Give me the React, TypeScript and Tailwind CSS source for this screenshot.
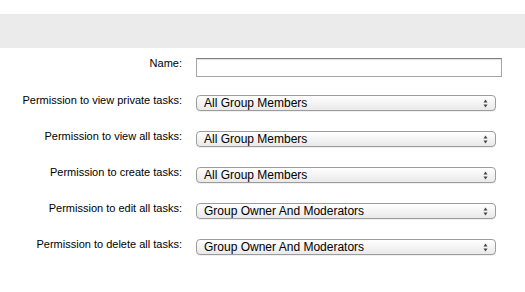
const rows = [
  { label: "Permission to view private tasks:", value: "All Group Members" },
  { label: "Permission to view all tasks:", value: "All Group Members" },
  { label: "Permission to create tasks:", value: "All Group Members" },
  { label: "Permission to edit all tasks:", value: "Group Owner And Moderators" },
  { label: "Permission to delete all tasks:", value: "Group Owner And Moderators" },
];

function SelectBox({ value }: { value: string }) {
  return (
    <div className="w-[300px] h-[16px] rounded-[4px] border border-[#9c9c9c] bg-gradient-to-b from-white to-[#e9e9e9] flex items-center justify-between pl-[7px] pr-[7px] shadow-[0_1px_0_rgba(0,0,0,0.06)]">
      <span className="text-[12px] leading-[14px] text-black">{value}</span>
      <svg width="5" height="9" viewBox="0 0 5 9" className="text-[#444]">
        <path d="M2.5 0.5 L4.5 3.5 L0.5 3.5 Z" fill="currentColor" />
        <path d="M2.5 8.5 L4.5 5.5 L0.5 5.5 Z" fill="currentColor" />
      </svg>
    </div>
  );
}

export default function App() {
  return (
    <div className="w-[525px] h-[292px] bg-white font-['Liberation_Sans',Arial,sans-serif] text-[11px] text-black pt-[14px]">
      {/* header bar */}
      <div className="h-[34px] bg-[#ebebeb]" />

      <div className="pt-[10px] flex flex-col">
        {/* Name row */}
        <div className="grid grid-cols-[182px_1fr] gap-x-[14px] items-start">
          <label className="text-right leading-[13px] -mt-[1px]">Name:</label>
          <input
            className="w-[306px] h-[19px] border border-[#a5a5a5] border-t-[#7f7f7f] bg-white outline-none px-1 text-[11px] shadow-[inset_0_1px_1px_rgba(0,0,0,0.12)]"
            defaultValue=""
          />
        </div>

        <div className="mt-[18px] flex flex-col gap-[20px]">
          {rows.map((r) => (
            <div key={r.label} className="grid grid-cols-[182px_1fr] gap-x-[14px] items-start">
              <label className="text-right leading-[13px] -mt-[1px]">{r.label}</label>
              <SelectBox value={r.value} />
            </div>
          ))}
        </div>
      </div>
    </div>
  );
}
